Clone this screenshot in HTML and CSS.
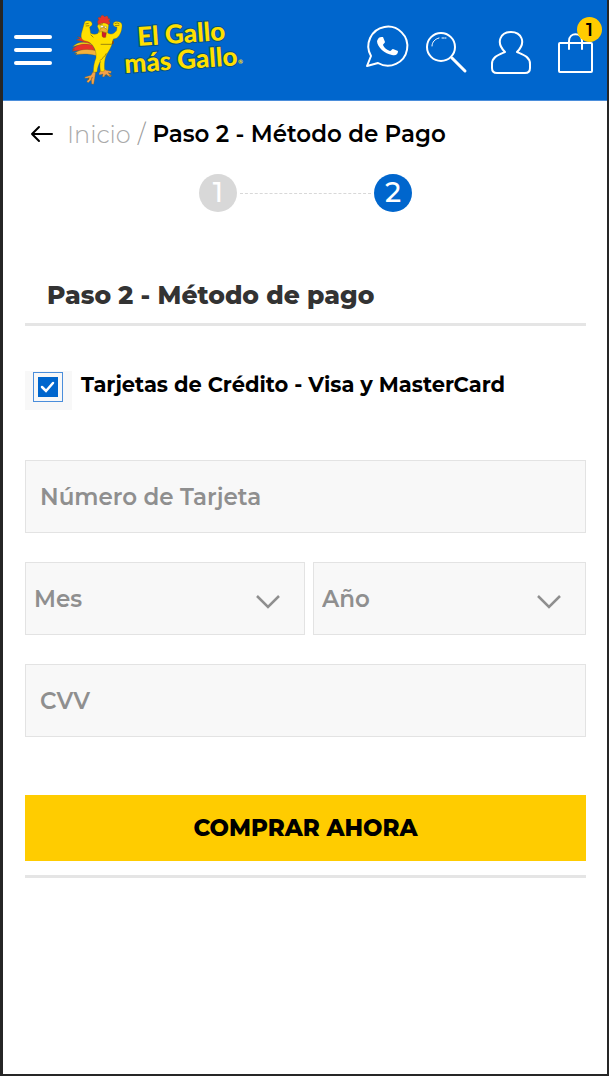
FILE: index.html
```html
<!DOCTYPE html>
<html lang="es">
<head>
  <meta charset="UTF-8">
  <meta name="viewport" content="width=device-width, initial-scale=1.0">
  <title>Paso 2 - Método de Pago</title>
  <link rel="stylesheet" href="styles.css">
</head>
<body>
  <header class="header">
    <button class="menu-btn" type="button" aria-label="Menú">
      <span></span>
      <span></span>
      <span></span>
    </button>

    <a class="logo" href="#" aria-label="El Gallo más Gallo">
      <svg width="176" height="76" viewBox="70 12 176 76">
        <!-- gallo -->
        <g transform="translate(65 8) scale(.3333)" stroke="#6d5a12" stroke-width="1" stroke-linejoin="round">
          <path fill="#e8332a" d="M78 101C62 92 50 88 37 86c4 3 6 5 8 7-5 0-8 1-11 3 12 2 28 8 43 14z"/>
          <path fill="#f7d117" d="M80 109C60 99 38 101 23 116c18-6 38-4 58 7z"/>
          <path fill="#e8332a" d="M84 112c-20-5-44-8-63 13l8-2-8 7c26-5 47-3 73 9z"/>
          <path fill="#f3b13c" d="M94 128c-24-5-46-7-67 8l9-1-4 5c22-3 42-3 65 4z"/>
          <path fill="#f3a04a" d="M84 191l-6 11-18 5-1 4 13-1-7 11 5 3 9-9 1 13 6 1 3-17 3-20z"/>
          <path fill="#f3a04a" d="M108 187l-6 9 1 5 11-3-2 8 5 1 6-8 12 8 5-4-11-9 9 2 1-6-15-3-5-3z"/>
          <path fill="#ffe000" d="M58 45c1-6 8-8 14-6 8 0 11 7 9 13l-7 5 3 19c8 3 14 4 22 0l3-9-5-12 6-13 18-1 10 10-3 24c11 7 20 2 27-8l1-10c-8 0-13-5-11-12 3-5 12-6 18-3 8 2 9 9 8 15-1 13-5 22-12 30-5 5-9 5-14 6-2 14-7 26-15 38-9 13-13 28-11 57l-7 3-6-2c-1-10-2-18 0-29-5 10-9 19-10 32l-11 1c0-14 2-30 8-43 1-14-1-25-11-39-6-7-12-10-21-12-11-3-14-10-12-22z"/>
          <path fill="#e8332a" d="M101 50c-5-6-4-13 1-15-6-5-2-9 5-6 0-9 8-10 12-2 5-7 13-2 10 5 8-3 7 4 2 7 6 2 5 8 0 11-9-6-20-7-30 0z"/>
          <path fill="#f5b22b" d="M107 61l10-3 12 10-5 6-14-4-8 3z"/>
          <path fill="#d31928" d="M111 71l13 4-2 13c-6 2-9 0-11-4z"/>
          <path fill="#fff" d="M105 54l9-2 2 6-8 1zM119 54l6 2-1 5-5-2z"/>
          <path fill="none" stroke-width="2" d="M61 48l10-2M62 54l11-1M149 47l8-2 6 3M150 53l13-1M103 51l11-4M107 109h33M105 158c7-8 15-12 19-22M77 80l8 8"/>
          <path fill="#854819" stroke="none" d="M143 97l4 4-2 8-5-1z"/>
          <path fill="none" stroke-width="2" d="M72 208l-2 8M82 207l-3 8M119 202l8 3M132 201l7 3"/>
        </g>
        <g class="logo-text">
          <text x="138" y="46" transform="rotate(-4 138 46)">El Gallo</text>
          <text x="125" y="73" transform="rotate(-4 125 73)">más Gallo</text>
          <text class="logo-mark" x="238" y="64">®</text>
        </g>
      </svg>
    </a>

    <nav class="actions">
      <a href="#" aria-label="WhatsApp">
        <svg viewBox="0 0 48 52">
          <path d="M4 42L8 32A19.500 19.500 0 1 1 15 39z"/>
          <path class="solid" d="M15 15c1-2 3-2 5-2l2 5c0 1-2 2-2 3 1 3 4 5 7 6 1 0 2-2 3-2l5 2c0 4-3 5-6 4-7-1-15-8-15-14z"/>
        </svg>
      </a>
      <a href="#" aria-label="Buscar">
        <svg viewBox="0 0 48 52">
          <circle cx="14" cy="23" r="14"/>
          <path class="handle" d="M25 34l13 13"/>
          <path class="thin" d="M5 22c0-4 3-7 7-8M15 14h2M18 14h1"/>
        </svg>
      </a>
      <a href="#" aria-label="Mi cuenta">
        <svg viewBox="0 0 48 52">
          <path d="M14 28C4 18 10 8 20 8s16 10 6 20c7 3 13 5 13 12v4c0 3-2 5-5 5H6c-3 0-5-2-5-5v-4c0-7 6-9 13-12z"/>
        </svg>
      </a>
      <a class="cart" href="#" aria-label="Carrito">
        <svg viewBox="0 0 48 52">
          <rect x="4" y="19" width="33" height="29" rx="1"/>
          <path d="M14 25v-8c0-9 13-9 13 0v8"/>
        </svg>
        <span class="badge">1</span>
      </a>
    </nav>
  </header>

  <main class="container">
    <nav class="breadcrumb">
      <a class="back" href="#" aria-label="Volver">
        <svg width="24" height="18" viewBox="0 0 24 18"><path d="M9 2L2 9l7 7M2 9h20"/></svg>
      </a>
      <a class="home" href="#">Inicio</a>
      <span class="slash">/</span>
      <span class="current">Paso 2 - Método de Pago</span>
    </nav>

    <div class="steps">
      <span class="step">1</span>
      <span class="step-line"></span>
      <span class="step active">2</span>
    </div>

    <form class="payment">
      <h1>Paso 2 - Método de pago</h1>

      <div class="method">
        <span class="check-box">
          <input type="checkbox" id="cards" checked>
        </span>
        <label for="cards">Tarjetas de Crédito - Visa y MasterCard</label>
      </div>

      <div class="fields">
        <input class="field" type="text" id="number" placeholder="Número de Tarjeta" aria-label="Número de Tarjeta">

        <div class="expiry">
          <select class="field" id="month" aria-label="Mes">
            <option>Mes</option>
            <option>01</option>
            <option>02</option>
            <option>03</option>
            <option>04</option>
            <option>05</option>
            <option>06</option>
            <option>07</option>
            <option>08</option>
            <option>09</option>
            <option>10</option>
            <option>11</option>
            <option>12</option>
          </select>
          <select class="field" id="year" aria-label="Año">
            <option>Año</option>
            <option>2024</option>
            <option>2025</option>
            <option>2026</option>
            <option>2027</option>
          </select>
        </div>

        <input class="field" type="text" id="cvv" placeholder="CVV" aria-label="CVV">
      </div>

      <button class="buy-btn" type="submit">COMPRAR AHORA</button>
    </form>
  </main>
</body>
</html>
```
FILE: styles.css
```css
* {
  box-sizing: border-box;
}
body {
  margin: 0;
  min-height: 100vh;
  border: solid #262626;
  border-width: 0 2px 2px 3px;
  background: #fff;
  color: #000;
  font-family: Montserrat, Inter, sans-serif;
}
a {
  color: inherit;
  text-decoration: none;
}

/* header */
.header {
  display: flex;
  align-items: center;
  height: 101px;
  padding: 0 4px 0 11px;
  border-bottom: 1px solid #4b8edb;
  background: #0066cd;
}
.menu-btn {
  display: flex;
  flex-direction: column;
  gap: 9px;
  width: 38px;
  padding: 0;
  border: 0;
  background: none;
}
.menu-btn span {
  height: 4px;
  border-radius: 2px;
  background: #fff;
}
.logo {
  margin-left: 18px;
}
.logo svg {
  display: block;
}
.logo-text {
  fill: #ffe000;
  stroke: #07507e;
  stroke-width: 2px;
  paint-order: stroke;
  font: 900 26px Lato, sans-serif;
}
.logo-text .logo-mark {
  stroke: none;
  font-size: 6px;
}
.actions {
  display: flex;
  gap: 16px;
  margin-left: auto;
}
.actions svg {
  display: block;
  width: 48px;
  height: 52px;
  overflow: visible;
  fill: none;
  stroke: #fff;
  stroke-width: 2px;
  stroke-linecap: round;
  stroke-linejoin: round;
}
.actions .solid {
  fill: #fff;
  stroke: none;
}
.actions .handle {
  stroke-width: 3px;
}
.actions .thin {
  stroke-width: 1px;
}
.cart {
  position: relative;
}
.badge {
  position: absolute;
  top: -7px;
  right: 1px;
  width: 25px;
  height: 25px;
  border-radius: 50%;
  background: #fc0;
  font-size: 18px;
  font-weight: 600;
  line-height: 26px;
  text-align: center;
}

/* content */
.container {
  padding: 0 21px 0 22px;
}
.breadcrumb {
  display: flex;
  align-items: center;
  gap: 7px;
  height: 66px;
  padding-left: 5px;
  font-size: 24px;
}
.back {
  margin-right: 6px;
}
.back svg {
  display: block;
  fill: none;
  stroke: #000;
  stroke-width: 2px;
  stroke-linecap: round;
  stroke-linejoin: round;
}
.home {
  color: #aaa;
  font-weight: 300;
}
.slash {
  color: #999;
  font-weight: 300;
}
.current {
  font-size: 23px;
  font-weight: 600;
}
.steps {
  display: flex;
  align-items: center;
  justify-content: center;
  gap: 3px;
  padding-top: 7px;
}
.step {
  width: 38px;
  height: 38px;
  border-radius: 50%;
  background: #d8d8d8;
  color: #fff;
  font-size: 28px;
  font-weight: 500;
  line-height: 37px;
  text-align: center;
}
.step.active {
  background: #0066cd;
}
.step-line {
  width: 131px;
  border-top: 1px dashed #d8d8d8;
}
.payment {
  margin-top: 66px;
  padding-bottom: 14px;
  border-bottom: 3px solid #e5e5e5;
}
.payment h1 {
  margin: 0;
  padding: 0 22px 11px;
  border-bottom: 3px solid #e5e5e5;
  color: #333;
  font-size: 25px;
  font-weight: 800;
  line-height: 34px;
}
.method {
  display: flex;
  gap: 9px;
  margin-top: 45px;
  font-size: 21px;
  font-weight: 700;
  line-height: 27px;
}
.check-box {
  display: flex;
  width: 47px;
  height: 39px;
  padding: 1px 0 0 8px;
  background: #f8f8f8;
}
.check-box input {
  appearance: none;
  width: 30px;
  height: 30px;
  margin: 0;
  padding: 4px;
  border: 1px solid #4b8edb;
  background: #0066cd url("data:image/svg+xml,%3Csvg xmlns='http://www.w3.org/2000/svg' viewBox='0 0 20 20'%3E%3Cpath d='M4 10l4 4 7-8' fill='none' stroke='white' stroke-width='2.500' stroke-linecap='round'/%3E%3C/svg%3E") center / 20px no-repeat content-box;
}
.fields {
  display: grid;
  gap: 29px;
  margin-top: 50px;
}
.expiry {
  display: grid;
  grid-template-columns: 280fr 273fr;
  gap: 8px;
}
.field {
  width: 100%;
  height: 73px;
  padding: 0 14px;
  border: 1px solid #e3e3e3;
  border-radius: 0;
  background: #f8f8f8;
  color: #8f8f8f;
  font: 600 23px Montserrat, Inter, sans-serif;
}
.field::placeholder {
  color: #8f8f8f;
}
select.field {
  appearance: none;
  padding: 0 8px;
  background: #f8f8f8 url("data:image/svg+xml,%3Csvg xmlns='http://www.w3.org/2000/svg' width='24' height='14' viewBox='0 0 24 14'%3E%3Cpath d='M1 1l11 11L23 1' fill='none' stroke='%238f8f8f' stroke-width='2.500'/%3E%3C/svg%3E") right 24px top 32px no-repeat;
}
.buy-btn {
  display: block;
  width: 100%;
  height: 66px;
  margin-top: 58px;
  padding: 0;
  border: 0;
  background: #fc0;
  color: #000;
  font: 800 23px Montserrat, Inter, sans-serif;
}
```
